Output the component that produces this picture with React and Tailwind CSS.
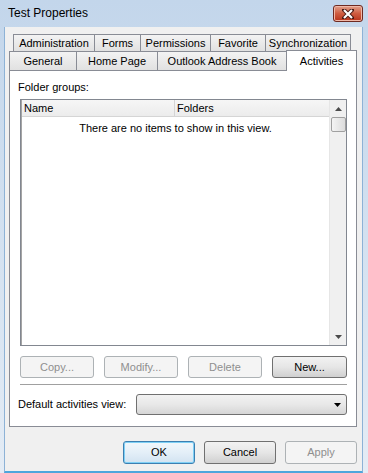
import React from 'react'

const font = "font-['Liberation_Sans',Arial,sans-serif]"

const Tab = ({ label, w, selected }) => {
  if (selected) {
    return (
      <div
        className={`relative z-10 -mb-px -ml-px flex h-[21px] items-start justify-center border border-b-0 border-[#898c95] bg-white pt-[2px] text-[11px] text-black ${w}`}
      >
        {label}
      </div>
    )
  }
  return (
    <div
      className={`-ml-px flex h-full items-center justify-center border border-b-0 border-[#898c95] bg-gradient-to-b from-[#f3f3f3] to-[#e1e1e1] text-[11px] text-black first:ml-0 ${w}`}
    >
      {label}
    </div>
  )
}

const Btn = ({ label, w, disabled, primary }) => {
  let cls = 'border-[#707070] bg-gradient-to-b from-[#f2f2f2] via-[#e6e6e6] to-[#d0d0d0] text-black'
  if (disabled) cls = 'border-[#adb2b5] bg-[#f4f4f4] text-[#8f8f8f]'
  if (primary)
    cls =
      'border-[#3c7fb1] bg-gradient-to-b from-[#f2f7fb] via-[#e4eff8] to-[#d2e3f1] text-black shadow-[inset_0_0_0_1px_#7fd0f5]'
  return (
    <div
      className={`flex items-center justify-center rounded-[3px] border text-[11px] ${cls} ${w}`}
    >
      {label}
    </div>
  )
}

const Triangle = ({ up, className }) => (
  <svg width="7" height="4" viewBox="0 0 7 4" className={className}>
    {up ? <path d="M0 4 L3.5 0 L7 4 Z" fill="currentColor" /> : <path d="M0 0 L7 0 L3.5 4 Z" fill="currentColor" />}
  </svg>
)

export default function App() {
  return (
    <div
      className={`flex h-[473px] w-[368px] flex-col bg-gradient-to-b from-[#c3d6eb] via-[#d3e1f0] to-[#e4ecf5] ${font}`}
    >
      {/* title bar */}
      <div className="flex h-[27px] shrink-0 items-start justify-between pl-[8px] pr-[5px]">
        <span className="mt-[6px] text-[12px] leading-[15px] text-black">Test Properties</span>
        <div className="mt-[5px] flex h-[17px] w-[30px] items-center justify-center rounded-[3px] border border-[#6e2a22] bg-gradient-to-b from-[#e0a08c] via-[#cf5c40] to-[#b8321a] shadow-[inset_0_0_0_1px_#f0b8a8]">
          <svg width="12" height="10" viewBox="0 0 12 10">
            <path
              d="M2 1 L10 9 M10 1 L2 9"
              stroke="#4a1a14"
              strokeWidth="4"
              strokeLinecap="square"
              fill="none"
            />
            <path d="M2 1 L10 9 M10 1 L2 9" stroke="#ffffff" strokeWidth="2.2" fill="none" />
          </svg>
        </div>
      </div>

      {/* body */}
      <div className="ml-[4px] mr-[5px] flex flex-1 flex-col border-x border-b-2 border-x-[#8db2d6] border-b-[#4ea6dc] bg-[#f0f0f0] pl-[4px] pt-[7px]">
        {/* tab rows */}
        <div className="ml-[4px] flex h-[17px]">
          <Tab label="Administration" w="w-[82px]" />
          <Tab label="Forms" w="w-[47px]" />
          <Tab label="Permissions" w="w-[71px]" />
          <Tab label="Favorite" w="w-[56px]" />
          <Tab label="Synchronization" w="w-[86px]" />
        </div>
        <div className="flex h-[19px] items-end">
          <Tab label="General" w="w-[68px]" />
          <Tab label="Home Page" w="w-[82px]" />
          <Tab label="Outlook Address Book" w="w-[130px]" />
          <Tab label="Activities" w="w-[71px]" selected />
        </div>

        {/* panel */}
        <div className="flex h-[357px] w-[348px] flex-col border border-[#898c95] bg-white text-[11px] text-black">
          <div className="ml-[8px] mt-[9px] leading-[14px]">Folder groups:</div>

          <div className="ml-[10px] mt-[5px] flex h-[247px] w-[327px] border border-[#828790]">
            <div className="flex flex-1 flex-col border-l border-[#a5a5a5]">
              <div className="flex h-[17px] border-b border-[#d5d5d5] bg-gradient-to-b from-[#f6f6f6] to-[#ececec]">
                <div className="flex w-[153px] items-center border-r border-[#d5d5d5] pl-[2px]">Name</div>
                <div className="flex flex-1 items-center pl-[2px]">Folders</div>
              </div>
              <div className="flex justify-center pt-[4px] leading-[14px]">There are no items to show in this view.</div>
            </div>
            <div className="flex w-[17px] flex-col items-center border-l border-[#e6e6e6] bg-[#f0f0f0]">
              <div className="flex h-[17px] w-full items-center justify-center text-[#4b4b4b]">
                <Triangle up />
              </div>
              <div className="h-[15px] w-[15px] rounded-[2px] border border-[#a0a0a0] bg-gradient-to-r from-[#f4f4f4] to-[#dcdcdc]" />
              <div className="flex-1" />
              <div className="flex h-[17px] w-full items-center justify-center text-[#4b4b4b]">
                <Triangle />
              </div>
            </div>
          </div>

          <div className="ml-[10px] mt-[10px] flex h-[22px] gap-[10px]">
            <Btn label="Copy..." w="w-[74px]" disabled />
            <Btn label="Modify..." w="w-[74px]" disabled />
            <Btn label="Delete" w="w-[74px]" disabled />
            <Btn label="New..." w="w-[75px]" />
          </div>

          <div className="ml-[10px] mt-[6px] h-px w-[327px] bg-[#a0a0a0]" />

          <div className="mt-[9px] flex h-[21px] items-center">
            <span className="ml-[8px] w-[118px]">Default activities view:</span>
            <div className="flex h-full w-[211px] items-center justify-end rounded-[3px] border border-[#707070] bg-gradient-to-b from-[#f2f2f2] via-[#e8e8e8] to-[#d6d6d6] pr-[5px]">
              <Triangle className="text-black" />
            </div>
          </div>
        </div>

        {/* dialog buttons */}
        <div className="mt-[14px] flex h-[23px] w-[348px] justify-end gap-[9px] text-black">
          <Btn label="OK" w="w-[72px]" primary />
          <Btn label="Cancel" w="w-[72px]" />
          <Btn label="Apply" w="w-[72px]" disabled />
        </div>
      </div>
    </div>
  )
}
